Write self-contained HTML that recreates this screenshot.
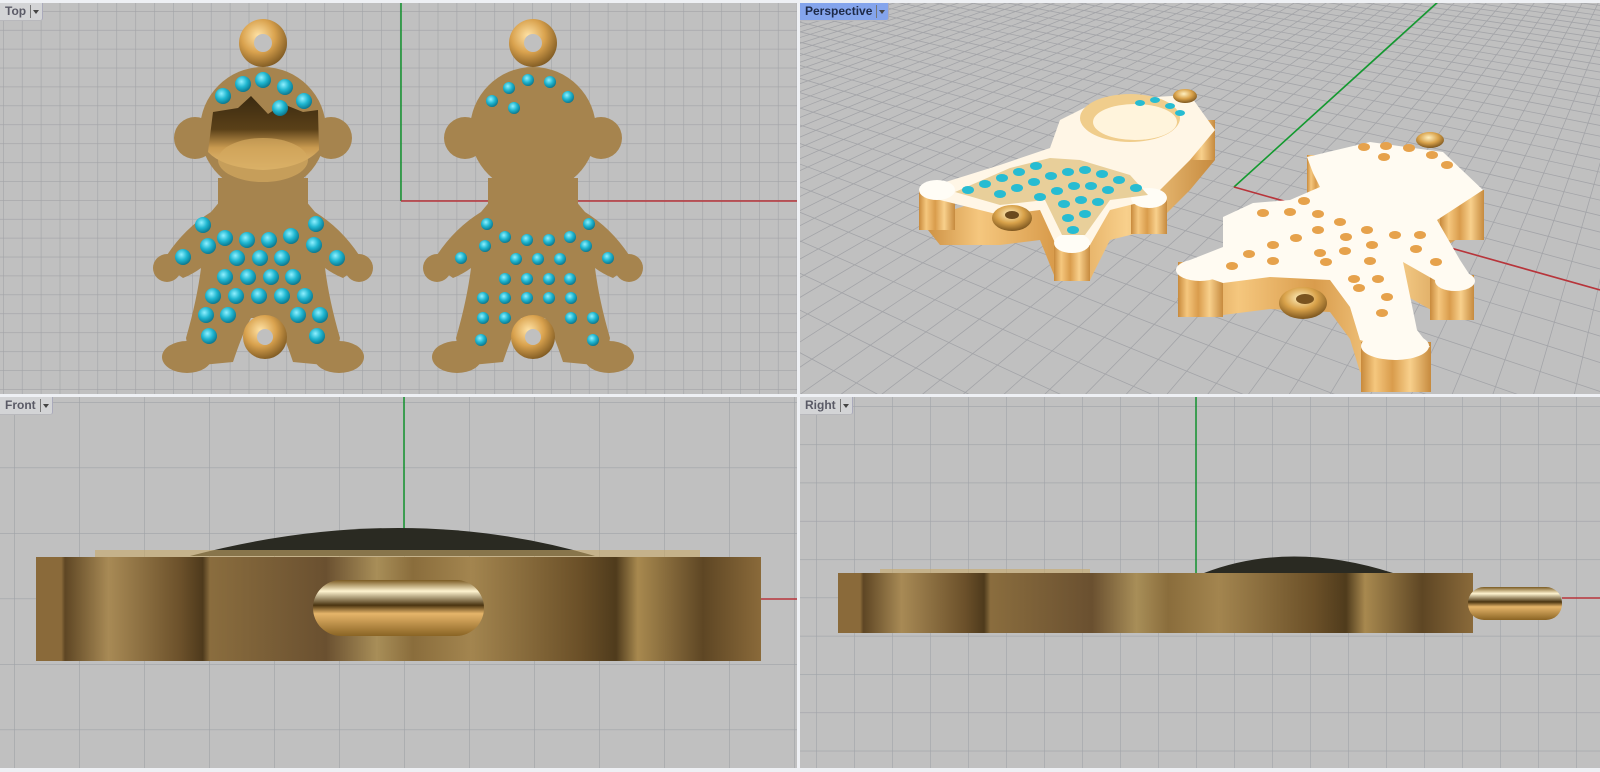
<!DOCTYPE html>
<html><head><meta charset="utf-8">
<style>
html,body{margin:0;padding:0;width:1600px;height:772px;overflow:hidden;background:#eef0f4;font-family:"Liberation Sans",sans-serif}
.vp{position:absolute;overflow:hidden;background:#c0c0c0}
.lbl{position:absolute;left:0;top:0;height:17px;background:#d3d4d6;border-right:1px solid #aab;border-bottom:1px solid #b8b8bc;font-size:12px;font-weight:bold;color:#5a5a66;line-height:17px;padding:0 2px 0 5px;border-radius:0 0 3px 0;white-space:nowrap}
.lbl span{display:inline-block;width:9px;margin-left:4px;border-left:1px solid #777;height:13px;vertical-align:-3px;position:relative}
.lbl span:after{content:"";position:absolute;left:2px;top:5px;border:3px solid transparent;border-top:4px solid #444}
svg{position:absolute;left:0;top:0}
</style></head><body>

<!-- TOP -->
<div class="vp" style="left:0;top:3px;width:797px;height:391px">
<svg width="797" height="391" viewBox="0 3 797 391">
<defs>
<pattern id="g1" x="3" y="11" width="18.9" height="18.9" patternUnits="userSpaceOnUse"><path d="M0 0H18.9M0 0V18.9" stroke="#a2a3a7" stroke-width="1.2" fill="none"/></pattern>
<radialGradient id="ring" cx="0.4" cy="0.35" r="0.7"><stop offset="0" stop-color="#ffe3a6"/><stop offset="0.5" stop-color="#d9a24e"/><stop offset="1" stop-color="#7a5620"/></radialGradient>
<radialGradient id="gem" cx="0.4" cy="0.35" r="0.7"><stop offset="0" stop-color="#8ef0ff"/><stop offset="0.5" stop-color="#1fb6d0"/><stop offset="1" stop-color="#0a6f86"/></radialGradient>
<linearGradient id="cav" x1="0" y1="0" x2="0" y2="1"><stop offset="0" stop-color="#3a2a10"/><stop offset="0.45" stop-color="#5a4018"/><stop offset="0.7" stop-color="#c99a50"/><stop offset="1" stop-color="#e6c07a"/></linearGradient>
<g id="body">
<circle cx="0" cy="130" r="63"/>
<circle cx="-68" cy="138" r="21"/><circle cx="68" cy="138" r="21"/>
<rect x="-45" y="178" width="90" height="34"/>
<path d="M-42 200 L-52 212 Q-78 228 -96 255 L-100 264 L-80 278 Q-70 274 -62 268 Q-66 300 -77 338 L-72 366 L-30 362 Q-20 332 -12 318 L12 318 Q20 332 30 362 L72 366 L77 338 Q66 300 62 268 Q70 274 80 278 L100 264 L96 255 Q78 228 52 212 L42 200 Z"/>
<circle cx="-96" cy="268" r="14"/><circle cx="96" cy="268" r="14"/>
<ellipse cx="-76" cy="357" rx="25" ry="16"/><ellipse cx="76" cy="357" rx="25" ry="16"/>
</g>
</defs>
<rect x="0" y="3" width="797" height="391" fill="url(#g1)"/>
<line x1="401" y1="3" x2="401" y2="201" stroke="#12922e" stroke-width="1.5"/>
<line x1="401" y1="201" x2="797" y2="201" stroke="#b8343a" stroke-width="1.5"/>
<g transform="translate(263,0)">
<circle cx="0" cy="43" r="24" fill="url(#ring)"/><circle cx="0" cy="43" r="9" fill="#c0c0c0"/>
<use href="#body" fill="#a6844e"/>
<path d="M-50 112 L-25 108 L-12 96 L5 114 L20 104 L40 112 L55 110 L56 150 Q40 168 0 170 Q-40 168 -55 152 Z" fill="url(#cav)"/>
<ellipse cx="0" cy="160" rx="45" ry="22" fill="#d4a960" opacity="0.7"/>
<circle cx="2" cy="337" r="22" fill="url(#ring)"/><circle cx="2" cy="337" r="8" fill="#c0c0c0"/>
<g fill="url(#gem)">
<circle cx="-40" cy="96" r="8"/><circle cx="-20" cy="84" r="8"/><circle cx="0" cy="80" r="8"/><circle cx="22" cy="87" r="8"/><circle cx="41" cy="101" r="8"/><circle cx="17" cy="108" r="8"/>
<circle cx="-60" cy="225" r="8"/><circle cx="-55" cy="246" r="8"/><circle cx="-80" cy="257" r="8"/><circle cx="-38" cy="238" r="8"/><circle cx="-16" cy="240" r="8"/><circle cx="6" cy="240" r="8"/><circle cx="28" cy="236" r="8"/><circle cx="53" cy="224" r="8"/><circle cx="51" cy="245" r="8"/><circle cx="74" cy="258" r="8"/>
<circle cx="-26" cy="258" r="8"/><circle cx="-3" cy="258" r="8"/><circle cx="19" cy="258" r="8"/>
<circle cx="-38" cy="277" r="8"/><circle cx="-15" cy="277" r="8"/><circle cx="8" cy="277" r="8"/><circle cx="30" cy="277" r="8"/>
<circle cx="-50" cy="296" r="8"/><circle cx="-27" cy="296" r="8"/><circle cx="-4" cy="296" r="8"/><circle cx="19" cy="296" r="8"/><circle cx="42" cy="296" r="8"/>
<circle cx="-57" cy="315" r="8"/><circle cx="-35" cy="315" r="8"/><circle cx="35" cy="315" r="8"/><circle cx="57" cy="315" r="8"/>
<circle cx="-54" cy="336" r="8"/><circle cx="54" cy="336" r="8"/>
</g>
</g>
<g transform="translate(533,0)">
<circle cx="0" cy="43" r="24" fill="url(#ring)"/><circle cx="0" cy="43" r="9" fill="#c0c0c0"/>
<use href="#body" fill="#a6844e"/>
<circle cx="0" cy="337" r="22" fill="url(#ring)"/><circle cx="0" cy="337" r="8" fill="#c0c0c0"/>
<g fill="url(#gem)">
<circle cx="-41" cy="101" r="6"/><circle cx="-24" cy="88" r="6"/><circle cx="-5" cy="80" r="6"/><circle cx="17" cy="82" r="6"/><circle cx="35" cy="97" r="6"/><circle cx="-19" cy="108" r="6"/>
<circle cx="-46" cy="224" r="6"/><circle cx="56" cy="224" r="6"/><circle cx="-48" cy="246" r="6"/><circle cx="53" cy="246" r="6"/><circle cx="-72" cy="258" r="6"/><circle cx="75" cy="258" r="6"/>
<circle cx="-28" cy="237" r="6"/><circle cx="-6" cy="240" r="6"/><circle cx="16" cy="240" r="6"/><circle cx="37" cy="237" r="6"/>
<circle cx="-17" cy="259" r="6"/><circle cx="5" cy="259" r="6"/><circle cx="27" cy="259" r="6"/>
<circle cx="-28" cy="279" r="6"/><circle cx="-6" cy="279" r="6"/><circle cx="16" cy="279" r="6"/><circle cx="37" cy="279" r="6"/>
<circle cx="-50" cy="298" r="6"/><circle cx="-28" cy="298" r="6"/><circle cx="-6" cy="298" r="6"/><circle cx="16" cy="298" r="6"/><circle cx="38" cy="298" r="6"/>
<circle cx="-50" cy="318" r="6"/><circle cx="-28" cy="318" r="6"/><circle cx="38" cy="318" r="6"/><circle cx="60" cy="318" r="6"/>
<circle cx="-52" cy="340" r="6"/><circle cx="60" cy="340" r="6"/>
</g>
</g>
</svg>
<div class="lbl">Top<span></span></div>
</div>

<!-- PERSPECTIVE -->
<div class="vp" style="left:800px;top:3px;width:800px;height:391px">
<svg width="800" height="391" viewBox="800 3 800 391">
<defs>
<linearGradient id="side" x1="0" y1="0" x2="1" y2="0"><stop offset="0" stop-color="#c88a3c"/><stop offset="0.2" stop-color="#f5c77e"/><stop offset="0.45" stop-color="#d99c4c"/><stop offset="0.7" stop-color="#f8d08c"/><stop offset="1" stop-color="#c68a3e"/></linearGradient>
<radialGradient id="pring" cx="0.45" cy="0.35" r="0.7"><stop offset="0" stop-color="#fff0c0"/><stop offset="0.5" stop-color="#d9a24a"/><stop offset="1" stop-color="#6e4a18"/></radialGradient>
</defs>
<g id="pgrid" stroke="#a3a4a8" stroke-width="0.8"></g>
<line x1="1234" y1="187" x2="1440" y2="0" stroke="#139a2f" stroke-width="1.6"/>
<line x1="1234" y1="187" x2="1600" y2="290" stroke="#b8343a" stroke-width="1.6"/>
<g>
<path d="M920 190 L1000 165 L1050 148 L1060 120 L1100 100 L1190 95 L1215 130 L1190 160 L1150 200 L1110 210 L1090 250 L1056 250 L1040 210 L1000 215 L940 215 Z" fill="url(#side)" transform="translate(0,30)"/>
<rect x="919" y="190" width="36" height="40" fill="url(#side)"/>
<rect x="1054" y="243" width="36" height="38" fill="url(#side)"/>
<rect x="1131" y="198" width="36" height="36" fill="url(#side)"/>
<rect x="1170" y="120" width="45" height="40" fill="url(#side)"/>
<path d="M920 190 L1000 165 L1050 148 L1060 120 L1100 100 L1190 95 L1215 130 L1190 160 L1150 200 L1110 210 L1090 245 L1056 245 L1040 210 L1000 215 L940 200 Z" fill="#fff6e6"/>
<ellipse cx="937" cy="190" rx="18" ry="10" fill="#fffdf6"/>
<ellipse cx="1072" cy="243" rx="18" ry="10" fill="#fffdf6"/>
<ellipse cx="1149" cy="198" rx="18" ry="10" fill="#fffdf6"/>
<ellipse cx="1130" cy="118" rx="50" ry="24" fill="#f0cd8c"/>
<ellipse cx="1135" cy="122" rx="42" ry="18" fill="#fff4dc"/>
<ellipse cx="1185" cy="96" rx="12" ry="7" fill="url(#pring)"/>
<path d="M955 192 L1010 168 L1050 158 L1080 160 L1130 175 L1148 195 L1110 200 L1085 235 L1062 235 L1045 200 L1000 205 Z" fill="#e8cf9a"/>
<g fill="#27bcd2">
<ellipse cx="968" cy="190" rx="6" ry="4"/><ellipse cx="985" cy="184" rx="6" ry="4"/><ellipse cx="1002" cy="178" rx="6" ry="4"/><ellipse cx="1019" cy="172" rx="6" ry="4"/><ellipse cx="1036" cy="166" rx="6" ry="4"/>
<ellipse cx="1000" cy="194" rx="6" ry="4"/><ellipse cx="1017" cy="188" rx="6" ry="4"/><ellipse cx="1034" cy="182" rx="6" ry="4"/><ellipse cx="1051" cy="176" rx="6" ry="4"/><ellipse cx="1068" cy="172" rx="6" ry="4"/><ellipse cx="1085" cy="170" rx="6" ry="4"/><ellipse cx="1102" cy="174" rx="6" ry="4"/><ellipse cx="1119" cy="180" rx="6" ry="4"/><ellipse cx="1136" cy="188" rx="6" ry="4"/>
<ellipse cx="1040" cy="197" rx="6" ry="4"/><ellipse cx="1057" cy="191" rx="6" ry="4"/><ellipse cx="1074" cy="186" rx="6" ry="4"/><ellipse cx="1091" cy="186" rx="6" ry="4"/><ellipse cx="1108" cy="190" rx="6" ry="4"/>
<ellipse cx="1064" cy="204" rx="6" ry="4"/><ellipse cx="1081" cy="200" rx="6" ry="4"/><ellipse cx="1098" cy="202" rx="6" ry="4"/>
<ellipse cx="1068" cy="218" rx="6" ry="4"/><ellipse cx="1085" cy="214" rx="6" ry="4"/><ellipse cx="1073" cy="230" rx="6" ry="4"/>
<ellipse cx="1140" cy="103" rx="5" ry="3"/><ellipse cx="1155" cy="100" rx="5" ry="3"/><ellipse cx="1170" cy="106" rx="5" ry="3"/><ellipse cx="1180" cy="113" rx="5" ry="3"/>
</g>
<ellipse cx="1012" cy="218" rx="20" ry="13" fill="url(#pring)"/><ellipse cx="1012" cy="215" rx="7" ry="4" fill="#6a4a1e"/>
</g>
<g>
<path d="M1307 157 L1370 142 L1443 152 L1483 190 L1457 207 L1437 220 L1460 260 L1473 280 L1447 287 L1403 262 L1417 330 L1430 347 L1403 353 L1360 340 L1350 307 L1330 280 L1270 277 L1223 283 L1177 267 L1190 260 L1223 247 L1223 217 L1253 203 L1290 200 L1320 187 L1313 173 Z" fill="url(#side)" transform="translate(0,32)"/>
<rect x="1178" y="262" width="45" height="55" fill="url(#side)"/>
<rect x="1361" y="342" width="70" height="50" fill="url(#side)"/>
<rect x="1430" y="275" width="44" height="45" fill="url(#side)"/>
<rect x="1440" y="190" width="44" height="50" fill="url(#side)"/>
<rect x="1307" y="155" width="20" height="50" fill="url(#side)"/>
<path d="M1307 157 L1370 142 L1443 152 L1483 190 L1457 207 L1437 220 L1460 260 L1473 280 L1447 287 L1403 262 L1417 330 L1430 347 L1403 353 L1360 340 L1350 307 L1330 280 L1270 277 L1223 283 L1177 267 L1190 260 L1223 247 L1223 217 L1253 203 L1290 200 L1320 187 L1313 173 Z" fill="#fffbf2"/>
<ellipse cx="1395" cy="346" rx="34" ry="14" fill="#fffbf2"/>
<ellipse cx="1200" cy="270" rx="24" ry="11" fill="#fffbf2"/>
<ellipse cx="1455" cy="281" rx="20" ry="10" fill="#fffbf2"/>
<ellipse cx="1430" cy="140" rx="14" ry="8" fill="url(#pring)"/>
<g fill="#e6a24c">
<ellipse cx="1364" cy="147" rx="6" ry="4"/><ellipse cx="1386" cy="146" rx="6" ry="4"/><ellipse cx="1409" cy="148" rx="6" ry="4"/><ellipse cx="1384" cy="157" rx="6" ry="4"/><ellipse cx="1432" cy="155" rx="6" ry="4"/><ellipse cx="1447" cy="165" rx="6" ry="4"/>
<ellipse cx="1304" cy="201" rx="6" ry="4"/><ellipse cx="1263" cy="213" rx="6" ry="4"/><ellipse cx="1290" cy="212" rx="6" ry="4"/><ellipse cx="1318" cy="214" rx="6" ry="4"/><ellipse cx="1340" cy="222" rx="6" ry="4"/>
<ellipse cx="1318" cy="230" rx="6" ry="4"/><ellipse cx="1346" cy="237" rx="6" ry="4"/><ellipse cx="1367" cy="230" rx="6" ry="4"/><ellipse cx="1395" cy="235" rx="6" ry="4"/><ellipse cx="1420" cy="235" rx="6" ry="4"/>
<ellipse cx="1296" cy="238" rx="6" ry="4"/><ellipse cx="1273" cy="245" rx="6" ry="4"/><ellipse cx="1320" cy="253" rx="6" ry="4"/><ellipse cx="1345" cy="251" rx="6" ry="4"/><ellipse cx="1372" cy="245" rx="6" ry="4"/><ellipse cx="1416" cy="249" rx="6" ry="4"/>
<ellipse cx="1249" cy="254" rx="6" ry="4"/><ellipse cx="1232" cy="266" rx="6" ry="4"/><ellipse cx="1273" cy="261" rx="6" ry="4"/><ellipse cx="1326" cy="262" rx="6" ry="4"/><ellipse cx="1370" cy="261" rx="6" ry="4"/><ellipse cx="1436" cy="262" rx="6" ry="4"/>
<ellipse cx="1354" cy="279" rx="6" ry="4"/><ellipse cx="1378" cy="279" rx="6" ry="4"/><ellipse cx="1359" cy="288" rx="6" ry="4"/><ellipse cx="1387" cy="297" rx="6" ry="4"/><ellipse cx="1382" cy="313" rx="6" ry="4"/>
</g>
<ellipse cx="1303" cy="303" rx="24" ry="16" fill="url(#pring)"/><ellipse cx="1305" cy="299" rx="9" ry="5" fill="#7a5420"/>
</g>
</svg>
<div class="lbl" style="background:#84a4ec;color:#1e2a48">Perspective<span></span></div>
</div>

<!-- FRONT -->
<div class="vp" style="left:0;top:397px;width:797px;height:371px">
<svg width="797" height="371" viewBox="0 397 797 371">
<defs>
<pattern id="g2" x="14" y="402" width="65" height="65.5" patternUnits="userSpaceOnUse"><path d="M0 0H65M0 0V65.5" stroke="#a0a3a8" stroke-width="1.3" fill="none"/></pattern>
<linearGradient id="bar1" x1="0" y1="0" x2="1" y2="0">
<stop offset="0" stop-color="#8a6a3a"/><stop offset="0.035" stop-color="#8a6a3a"/><stop offset="0.04" stop-color="#5e4624"/><stop offset="0.1" stop-color="#a88a55"/><stop offset="0.2" stop-color="#6b502a"/><stop offset="0.23" stop-color="#4e3a1c"/><stop offset="0.24" stop-color="#8a6d3e"/><stop offset="0.4" stop-color="#6a5030"/><stop offset="0.47" stop-color="#a88e58"/><stop offset="0.52" stop-color="#8a6d3c"/><stop offset="0.6" stop-color="#a3854f"/><stop offset="0.75" stop-color="#6b5028"/><stop offset="0.8" stop-color="#4f3b1c"/><stop offset="0.83" stop-color="#a8894f"/><stop offset="0.92" stop-color="#5e4624"/><stop offset="1" stop-color="#8a6a3a"/></linearGradient>
<linearGradient id="ring2" x1="0" y1="0" x2="0" y2="1"><stop offset="0" stop-color="#7a5a22"/><stop offset="0.2" stop-color="#fff4d0"/><stop offset="0.45" stop-color="#4a3410"/><stop offset="0.6" stop-color="#e6b56a"/><stop offset="1" stop-color="#8a6424"/></linearGradient>
</defs>
<rect x="0" y="397" width="797" height="371" fill="url(#g2)"/>
<line x1="404" y1="397" x2="404" y2="530" stroke="#12922e" stroke-width="1.5"/>
<line x1="761" y1="599" x2="797" y2="599" stroke="#b8343a" stroke-width="1.5"/>
<path d="M190 556 Q404 500 595 556 Z" fill="#2a2a22"/>
<path d="M95 557 L700 557 L700 550 L95 550 Z" fill="#c8a868" opacity="0.6"/>
<rect x="36" y="557" width="725" height="104" fill="url(#bar1)"/>
<rect x="313" y="580" width="171" height="56" rx="28" fill="url(#ring2)"/>
</svg>
<div class="lbl">Front<span></span></div>
</div>

<!-- RIGHT -->
<div class="vp" style="left:800px;top:397px;width:800px;height:371px">
<svg width="800" height="371" viewBox="800 397 800 371">
<defs>
<pattern id="g3" x="816" y="406" width="38" height="38.3" patternUnits="userSpaceOnUse"><path d="M0 0H38M0 0V38.3" stroke="#a0a3a8" stroke-width="1.2" fill="none"/></pattern>
</defs>
<rect x="800" y="397" width="800" height="371" fill="url(#g3)"/>
<line x1="1196" y1="397" x2="1196" y2="573" stroke="#12922e" stroke-width="1.5"/>
<line x1="1562" y1="598" x2="1600" y2="598" stroke="#b8343a" stroke-width="1.5"/>
<path d="M1204 573 Q1290 540 1393 573 Z" fill="#2a2a22"/>
<rect x="880" y="569" width="210" height="4" fill="#c8a868" opacity="0.6"/>
<rect x="838" y="573" width="635" height="60" fill="url(#bar1)"/>
<rect x="1468" y="587" width="94" height="33" rx="16" fill="url(#ring2)"/>
</svg>
<div class="lbl">Right<span></span></div>
</div>

<script>
(function(){
var g=document.getElementById('pgrid');
var O=[1234,187],VA=[-326,-250],VB=[1719,-250],DA=74,DB=33,ns='http://www.w3.org/2000/svg';
function add(V,P){var x2=P[0]+(P[0]-V[0])*30,y2=P[1]+(P[1]-V[1])*30;var l=document.createElementNS(ns,'line');l.setAttribute('x1',V[0]);l.setAttribute('y1',V[1]);l.setAttribute('x2',x2);l.setAttribute('y2',y2);g.appendChild(l);}
for(var s=-73;s<=300;s++){var t=s/(s+DA);add(VB,[O[0]+(VA[0]-O[0])*t,O[1]+(VA[1]-O[1])*t]);}
for(var s=-32;s<=300;s++){var t=s/(s+DB);add(VA,[O[0]+(VB[0]-O[0])*t,O[1]+(VB[1]-O[1])*t]);}
})();
</script>
</body></html>
